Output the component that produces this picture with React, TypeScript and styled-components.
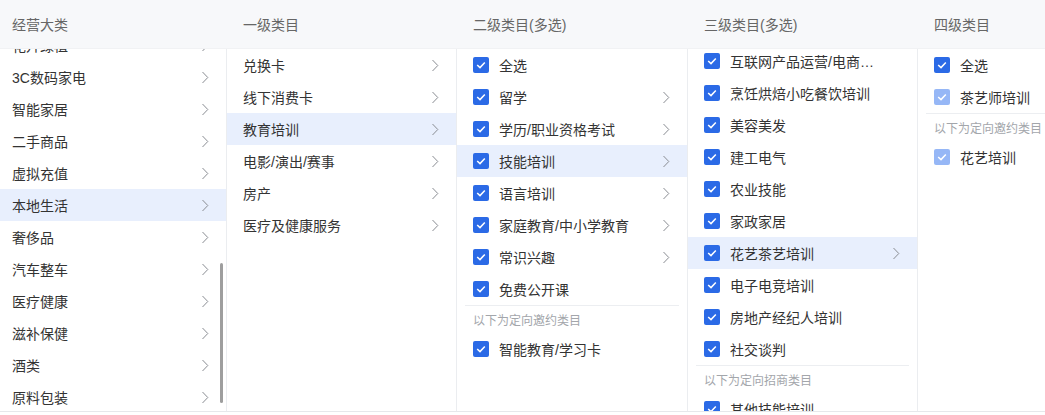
import React from 'react';
import styled, { createGlobalStyle } from 'styled-components';

const GlobalStyle = createGlobalStyle`
  body {
    margin: 0;
    background: #ffffff;
    font-family: "Liberation Sans", "Noto Sans CJK SC", sans-serif;
  }
`;

const Viewport = styled.div`
  width: 1045px;
  overflow: hidden;
`;

const Panel = styled.div`
  display: flex;
  width: 1100px;
  height: 412px;
  border-bottom: 1px solid #e6e8eb;
  box-sizing: border-box;
`;

const Column = styled.div<{ width: number }>`
  display: flex;
  flex-direction: column;
  flex: 0 0 ${({ width }) => width}px;
  min-width: 0;
`;

const ColumnHeader = styled.div<{ inset: number }>`
  flex: 0 0 48px;
  display: flex;
  align-items: center;
  padding-left: ${({ inset }) => inset}px;
  background: #f7f8fa;
  border-bottom: 1px solid #f1f2f4;
  color: #666666;
  font-size: 14px;
  white-space: nowrap;
`;

const ColumnBody = styled.div<{ divider: boolean }>`
  position: relative;
  flex: 1 1 auto;
  overflow: hidden;
  border-right: ${({ divider }) => (divider ? '1px solid #ebedf0' : 'none')};
`;

const List = styled.div<{ offset: number }>`
  display: flex;
  flex-direction: column;
  margin-top: ${({ offset }) => -offset}px;
`;

const Row = styled.div<{ active?: boolean; inset: number }>`
  display: flex;
  align-items: center;
  height: 32px;
  flex: 0 0 32px;
  padding: 0 17px 0 ${({ inset }) => inset}px;
  background: ${({ active }) => (active ? '#e8effd' : 'transparent')};
  color: #333333;
  font-size: 14px;
  box-sizing: border-box;
`;

const Label = styled.span`
  flex: 0 1 auto;
  max-width: 146px;
  white-space: nowrap;
  overflow: hidden;
  text-overflow: ellipsis;
`;

const Spacer = styled.span`
  flex: 1 1 auto;
`;

const Box = styled.span<{ muted?: boolean }>`
  display: inline-flex;
  align-items: center;
  justify-content: center;
  flex: 0 0 16px;
  width: 16px;
  height: 16px;
  margin-right: 10px;
  border-radius: 2px;
  background: ${({ muted }) => (muted ? '#96b7f6' : '#2b6ae6')};
`;

const GroupLabel = styled.div`
  display: flex;
  align-items: center;
  height: 28px;
  flex: 0 0 28px;
  margin: 0 8px;
  padding-left: 8px;
  border-top: 1px solid #eceef1;
  color: #a3a6ab;
  font-size: 12px;
  white-space: nowrap;
  box-sizing: border-box;
`;

const ScrollThumb = styled.div`
  position: absolute;
  top: 214px;
  right: 3px;
  width: 3px;
  height: 140px;
  border-radius: 2px;
  background: #9e9e9e;
`;

const Check = ({ muted }: { muted?: boolean }) => (
  <Box muted={muted}>
    <svg width="10" height="8" viewBox="0 0 10 8">
      <polyline points="1.2,4 4,6.6 8.8,1.4" fill="none" stroke="#ffffff" strokeWidth="1.5" />
    </svg>
  </Box>
);

const Chevron = () => (
  <svg width="8" height="13" viewBox="0 0 8 13">
    <polyline points="1.5,1 6.8,6.5 1.5,12" fill="none" stroke="#8a8d93" strokeWidth="1" />
  </svg>
);

interface Item {
  label: string;
  arrow?: boolean;
  active?: boolean;
  check?: 'on' | 'muted';
  group?: string;
}

const plain = (label: string, active = false): Item => ({ label, arrow: true, active });

const level0: Item[] = [
  '花卉绿植', '3C数码家电', '智能家居', '二手商品', '虚拟充值', '本地生活',
  '奢侈品', '汽车整车', '医疗健康', '滋补保健', '酒类', '原料包装', '宠物用品',
].map((l) => plain(l, l === '本地生活'));

const level1: Item[] = ['兑换卡', '线下消费卡', '教育培训', '电影/演出/赛事', '房产', '医疗及健康服务']
  .map((l) => plain(l, l === '教育培训'));

const level2: Item[] = [
  { label: '全选', check: 'on' },
  { label: '留学', check: 'on', arrow: true },
  { label: '学历/职业资格考试', check: 'on', arrow: true },
  { label: '技能培训', check: 'on', arrow: true, active: true },
  { label: '语言培训', check: 'on', arrow: true },
  { label: '家庭教育/中小学教育', check: 'on', arrow: true },
  { label: '常识兴趣', check: 'on', arrow: true },
  { label: '免费公开课', check: 'on' },
  { label: '智能教育/学习卡', check: 'on', group: '以下为定向邀约类目' },
];

const level3: Item[] = [
  { label: '互联网产品运营/电商培训', check: 'on' },
  { label: '烹饪烘焙小吃餐饮培训', check: 'on' },
  { label: '美容美发', check: 'on' },
  { label: '建工电气', check: 'on' },
  { label: '农业技能', check: 'on' },
  { label: '家政家居', check: 'on' },
  { label: '花艺茶艺培训', check: 'on', arrow: true, active: true },
  { label: '电子电竞培训', check: 'on' },
  { label: '房地产经纪人培训', check: 'on' },
  { label: '社交谈判', check: 'on' },
  { label: '其他技能培训', check: 'on', group: '以下为定向招商类目' },
  { label: '驾驶培训', check: 'on' },
];

const level4: Item[] = [
  { label: '全选', check: 'on' },
  { label: '茶艺师培训', check: 'muted' },
  { label: '花艺培训', check: 'muted', group: '以下为定向邀约类目' },
];

interface ColumnSpec {
  title: string;
  width: number;
  inset: number;
  offset: number;
  items: Item[];
  scrollbar?: boolean;
}

const columns: ColumnSpec[] = [
  { title: '经营大类', width: 227, inset: 12, offset: 20, items: level0, scrollbar: true },
  { title: '一级类目', width: 230, inset: 16, offset: 0, items: level1 },
  { title: '二级类目(多选)', width: 231, inset: 16, offset: 0, items: level2 },
  { title: '三级类目(多选)', width: 230, inset: 16, offset: 4, items: level3 },
  { title: '四级类目', width: 182, inset: 16, offset: 0, items: level4 },
];

export default function App() {
  return (
    <>
      <GlobalStyle />
      <Viewport>
        <Panel>
          {columns.map((col, ci) => (
            <Column key={col.title} width={col.width}>
              <ColumnHeader inset={col.inset}>{col.title}</ColumnHeader>
              <ColumnBody divider={ci < columns.length - 1}>
                <List offset={col.offset}>
                  {col.items.map((item) => (
                    <React.Fragment key={item.label}>
                      {item.group && <GroupLabel>{item.group}</GroupLabel>}
                      <Row active={item.active} inset={col.inset}>
                        {item.check && <Check muted={item.check === 'muted'} />}
                        <Label>{item.label}</Label>
                        <Spacer />
                        {item.arrow && <Chevron />}
                      </Row>
                    </React.Fragment>
                  ))}
                </List>
                {col.scrollbar && <ScrollThumb />}
              </ColumnBody>
            </Column>
          ))}
        </Panel>
      </Viewport>
    </>
  );
}
